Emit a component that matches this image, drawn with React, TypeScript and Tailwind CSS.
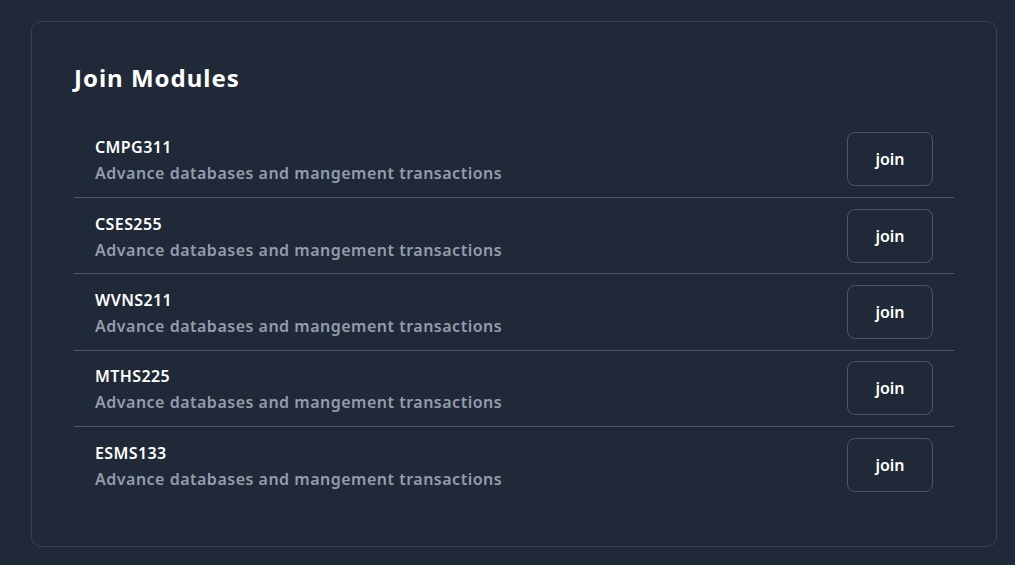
import React from 'react';

interface Module {
  code: string;
  description: string;
}

const modules: Module[] = [
  { code: 'CMPG311', description: 'Advance databases and mangement transactions' },
  { code: 'CSES255', description: 'Advance databases and mangement transactions' },
  { code: 'WVNS211', description: 'Advance databases and mangement transactions' },
  { code: 'MTHS225', description: 'Advance databases and mangement transactions' },
  { code: 'ESMS133', description: 'Advance databases and mangement transactions' },
];

const App = () => {
  return (
    <div className="min-h-screen bg-[#1f2937] pt-[21px] pr-[18px] pl-[31px] font-['Noto_Sans',sans-serif]">
      <div className="rounded-[10px] border border-[#374151] px-[42px] pt-[42px] pb-[44px]">
        <h1 className="text-2xl leading-7 font-bold tracking-[1px] text-white">Join Modules</h1>
        <ul className="mt-[29.5px]">
          {modules.map((m, i) => (
            <li
              key={m.code}
              className={
                i < modules.length - 1
                  ? 'flex items-center justify-between border-b border-[#4b5563] px-[21px] py-[10.7px]'
                  : 'flex items-center justify-between px-[21px] py-[10.7px]'
              }
            >
              <div className="pt-[2px] leading-[26px]">
                <div className="font-semibold tracking-[0.4px] text-white">{m.code}</div>
                <div className="font-semibold tracking-[0.5px] text-[#949cab]">{m.description}</div>
              </div>
              <button className="h-[54px] w-[86px] rounded-lg border border-[#4b5563] font-semibold text-white hover:bg-[#374151]">
                join
              </button>
            </li>
          ))}
        </ul>
      </div>
    </div>
  );
};

export default App;
